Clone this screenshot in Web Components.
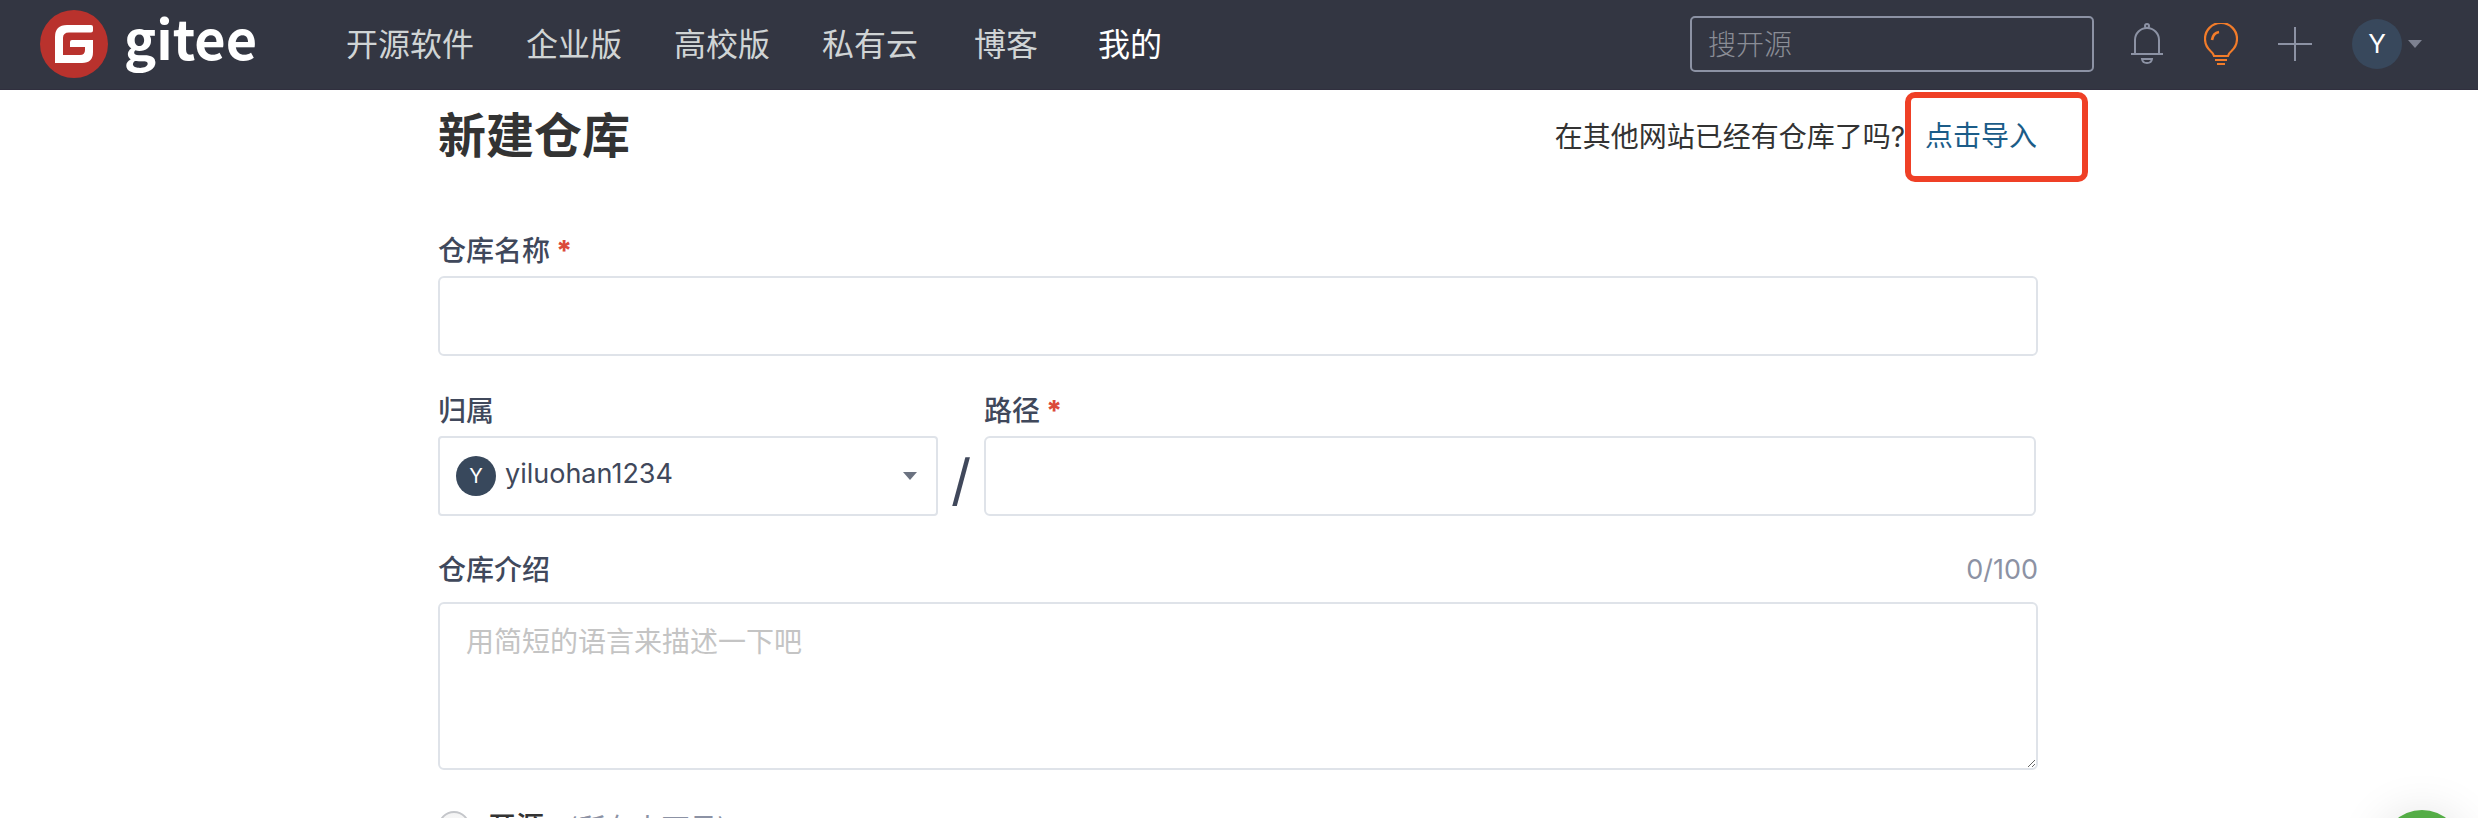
<!DOCTYPE html>
<html lang="zh-CN">
<head>
<meta charset="utf-8">
<meta name="viewport" content="width=device-width, initial-scale=1">
<title>新建仓库 - Gitee</title>
<style>
  html { scrollbar-width: none; }
  body {
    margin: 0;
    background: #fff;
    color: #40485b;
    font: 28px/40px Inter, "Noto Sans CJK SC", sans-serif;
  }
</style>
</head>
<body>
<gitee-page></gitee-page>
<script>
const define = (name, html, setup) => {
  const template = document.createElement('template');
  template.innerHTML = html;
  customElements.define(name, class extends HTMLElement {
    constructor() {
      super();
      this.attachShadow({ mode: 'open' }).append(template.content.cloneNode(true));
    }
    connectedCallback() { if (setup) setup(this, this.shadowRoot); }
  });
};

define('user-avatar', `
  <style>
    :host { display: flex; align-items: center; justify-content: center; flex: none;
      width: 40px; height: 40px; border-radius: 50%; background: #38485c; color: #fff; font-size: 20px; }
    :host([large]) { width: 50px; height: 50px; font-size: 26px; }
  </style>
  <slot></slot>`);

define('down-caret', `
  <style>
    :host { display: block; width: 14px; height: 8px; color: #6b7280; }
    svg { display: block; }
  </style>
  <svg width="14" height="8" viewBox="0 0 14 8" aria-hidden="true"><path d="M0 0h14L7 8z" fill="currentColor"/></svg>`);

define('gitee-logo', `
  <style>
    :host { display: block; width: 218px; }
    a { display: flex; align-items: center; gap: 16px; color: #fff; text-decoration: none; }
    svg { display: block; flex: none; }
    span { font: 700 54px/60px "Noto Sans CJK SC", sans-serif; margin-bottom: 14px; }
  </style>
  <a href="#">
    <svg width="68" height="68" viewBox="0 0 68 68" aria-hidden="true">
      <circle cx="34" cy="34" r="34" fill="#b9322d"/>
      <path d="M51 15H27Q15 15 15 27V53H42Q53 53 53 42V30H32Q30 30 30 32V37H45V40Q45 45 40 45H23V28Q23 22.500 29 22.500H51Q53 22.500 53 20.500V17Q53 15 51 15Z" fill="#fff"/>
    </svg>
    <span>gitee</span>
  </a>`);

define('main-nav', `
  <style>
    :host { display: block; }
    nav { display: flex; gap: 52px; }
    ::slotted(a) { color: #d0d4d5; font-size: 32px; line-height: 48px; text-decoration: none; white-space: nowrap; }
    ::slotted(a[wide]) { padding: 0 4px; }
    ::slotted(a[active]) { color: #fff; padding-left: 4px; }
  </style>
  <nav><slot></slot></nav>`);

define('search-box', `
  <style>
    :host { display: block; width: 404px; }
    input { display: block; box-sizing: border-box; width: 100%; height: 56px; padding: 2px 16px 0; border: 2px solid #8c92a4;
      border-radius: 5px; background: transparent; color: #fff; font: inherit; font-weight: 200; outline: 0; }
    input::placeholder { color: #8a8d96; opacity: 1; }
  </style>
  <input type="search" placeholder="搜开源" aria-label="搜开源">`);

define('site-header', `
  <style>
    :host { display: flex; align-items: center; box-sizing: border-box; height: 90px; padding: 0 56px 2px 40px;
      background: #333642; border-bottom: 1px solid #302f3e; }
    main-nav { margin: 2px 0 0 88px; }
    search-box { margin-left: auto; }
    .tools { display: flex; align-items: center; margin-left: 36px; gap: 40px; color: #8c92a4; }
    button { display: flex; align-items: center; padding: 0; border: 0; background: none; color: inherit; font: inherit; }
    svg { display: block; }
    .user { gap: 6px; }
    down-caret { color: #7d8190; }
  </style>
  <gitee-logo></gitee-logo>
  <main-nav>
    <a href="#">开源软件</a><a href="#">企业版</a><a href="#">高校版</a><a href="#">私有云</a><a href="#" wide>博客</a><a href="#" active>我的</a>
  </main-nav>
  <search-box></search-box>
  <div class="tools">
    <button type="button" aria-label="通知">
      <svg width="34" height="42" viewBox="0 0 34 42" fill="none" stroke="currentColor" stroke-width="2">
        <circle cx="17" cy="3" r="2"/>
        <path d="M5 30V17a12 12 0 0 1 24 0v13M1 31h32M12 36h10q-.5 4-5 4t-5-4z"/>
      </svg>
    </button>
    <button type="button" aria-label="动态">
      <svg width="34" height="42" viewBox="0 0 34 42" fill="none" stroke="#f27c2a" stroke-width="2.200">
        <path d="M10 33Q9 30 6.500 28A16 16 0 1 1 27.500 28Q25 30 24 33Z"/>
        <path d="M8 17Q9 10 15 9" stroke-width="2.600"/>
        <path d="M11 37h12M13 41h8"/>
      </svg>
    </button>
    <button type="button" aria-label="新建">
      <svg width="34" height="34" viewBox="0 0 34 34" stroke="currentColor" stroke-width="2"><path d="M17 0v34M0 17h34"/></svg>
    </button>
    <button type="button" class="user" aria-label="账户">
      <user-avatar large>Y</user-avatar><down-caret></down-caret>
    </button>
  </div>`);

define('page-title', `
  <style>
    :host { display: flex; align-items: center; justify-content: space-between; height: 92px; color: #333; }
    h1 { margin: 0; font-size: 48px; line-height: 64px; font-weight: 600; }
    p { display: flex; align-items: center; margin: 2px -50px 0 0; }
    a { box-sizing: border-box; width: 183px; padding: 18px 14px 20px; border: 6px solid #ef4026; border-radius: 10px;
      color: #1b5c88; text-decoration: none; }
  </style>
  <h1>新建仓库</h1>
  <p><span>在其他网站已经有仓库了吗?</span><a href="#">点击导入</a></p>`);

define('form-label', `
  <style>
    :host { display: flex; justify-content: space-between; line-height: 42px; padding-bottom: 4px; }
    ::slotted(label) { font-weight: 500; }
    i { flex: 1; margin-left: 6px; color: #db4a3c; font-style: normal; font-weight: 800; }
    :host(:not([required])) i { display: none; }
    ::slotted(output) { color: #8c92a4; font-size: 27px; }
  </style>
  <slot></slot><i aria-hidden="true">*</i><slot name="hint"></slot>`);

define('repo-form', `
  <style>
    :host { display: block; }
    form { display: grid; gap: 34px; margin: 48px 0 0; }
    input[type=text], select, textarea { display: block; box-sizing: border-box; width: 100%; height: 80px; margin: 0;
      padding: 0 28px; border: 2px solid #dfe3e9; border-radius: 6px; background: #fff; color: #40485b; font: inherit; outline: 0; }
    textarea { height: 168px; padding: 18px 26px; }
    textarea::placeholder { color: #c4c4c4; opacity: 1; }
    .row { display: grid; grid-template-columns: 500px 46px 1fr; align-items: end; padding-right: 2px; }
    .slash { height: 80px; font-size: 56px; line-height: 88px; text-align: center; }
    .owner { display: grid; grid-template-columns: 1fr; align-items: center; }
    .owner > * { grid-area: 1 / 1; }
    .owner user-avatar { margin-left: 18px; pointer-events: none; }
    .owner down-caret { margin-right: 21px; justify-self: end; pointer-events: none; }
    select { appearance: none; padding: 0 60px 4px 65px; border-radius: 4px; font-size: 27px; }
    form-label.about { line-height: 40px; padding-bottom: 12px; }
    .visibility { display: flex; align-items: center; margin-top: 3px; }
    .visibility input { appearance: none; width: 32px; height: 32px; margin: 0 18px 0 0; border: 2px solid #c4c6ca; border-radius: 50%;
      background: linear-gradient(#f4f4f4, #fff); }
    .visibility label { color: #333; font-weight: 500; }
    .visibility small { margin-left: 24px; font: 28px/40px "Noto Sans CJK SC", sans-serif; color: #8c92a4; }
  </style>
  <form>
    <div>
      <form-label required><label for="name">仓库名称</label></form-label>
      <input type="text" id="name">
    </div>
    <div class="row">
      <div>
        <form-label><label for="owner">归属</label></form-label>
        <div class="owner">
          <select id="owner"><option>yiluohan1234</option></select>
          <user-avatar>Y</user-avatar><down-caret></down-caret>
        </div>
      </div>
      <div class="slash">/</div>
      <div>
        <form-label required><label for="path">路径</label></form-label>
        <input type="text" id="path">
      </div>
    </div>
    <div>
      <form-label class="about"><label for="about">仓库介绍</label><output slot="hint" for="about">0/100</output></form-label>
      <textarea id="about" maxlength="100" placeholder="用简短的语言来描述一下吧"></textarea>
    </div>
    <div class="visibility">
      <input type="radio" name="visibility" id="public"><label for="public">开源</label><small>(所有人可见)</small>
    </div>
  </form>`, (host, root) => {
    const about = root.getElementById('about');
    const count = root.querySelector('output');
    about.addEventListener('input', () => { count.textContent = about.value.length + '/100'; });
  });

define('help-bubble', `
  <style>
    :host { position: fixed; right: 16px; bottom: -72px; }
    button { display: block; width: 80px; height: 80px; padding: 0; border: 0; border-radius: 50%; background: #54ad46;
      box-shadow: 0 6px 50px rgba(0, 0, 0, .14); }
  </style>
  <button type="button" aria-label="帮助"></button>`);

define('gitee-page', `
  <style>
    :host { display: block; }
    main { max-width: 1600px; margin: 0 auto; padding-right: 2px; }
  </style>
  <site-header></site-header>
  <main>
    <page-title></page-title>
    <repo-form></repo-form>
  </main>
  <help-bubble></help-bubble>`);
</script>
</body>
</html>
